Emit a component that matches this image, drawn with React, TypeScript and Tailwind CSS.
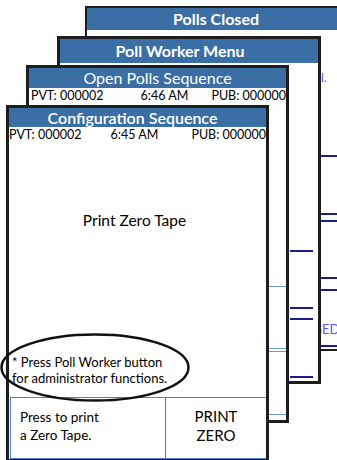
import React from "react";

const font = { fontFamily: "Lato, 'Open Sans', sans-serif" };

function NavyLine({ mt }: { mt: string }) {
  return <div className={`h-[2px] bg-[#1c1c8c] ${mt}`} />;
}

export default function App() {
  return (
    <div
      className="relative w-[337px] h-[460px] overflow-hidden bg-white text-black"
      style={font}
    >
      {/* Polls Closed */}
      <div className="absolute left-[85px] top-[6px] w-[262px] h-[345px] border-2 border-[#1e1e1e] bg-white flex flex-col">
        <div className="h-[22px] bg-[#3c6ea6] flex items-center justify-center text-white font-bold text-[16px] leading-none">
          Polls Closed
        </div>
        <div className="flex-1 flex flex-col pl-[234px]">
          <div className="mt-[41px] h-[14px] text-[12px] leading-[14px] text-[#4b4be6]">l.</div>
          <NavyLine mt="mt-[70px]" />
          <NavyLine mt="mt-[56px]" />
          <NavyLine mt="mt-[5px]" />
          <NavyLine mt="mt-[55px]" />
          <NavyLine mt="mt-[10px]" />
          <div className="mt-[31px] h-[14px] text-[13px] leading-[14px] text-[#5a5af0] -ml-[6px] whitespace-nowrap">SED</div>
          <NavyLine mt="mt-[9px]" />
        </div>
      </div>

      {/* Poll Worker Menu */}
      <div className="absolute left-[57px] top-[36px] w-[264px] h-[348px] border-[3px] border-[#1e1e1e] bg-white flex flex-col">
        <div className="h-[24px] bg-[#3c6ea6] flex items-center justify-center text-white font-bold text-[16px] leading-none pr-[18px]">
          Poll Worker Menu
        </div>
        <div className="flex-1 flex flex-col pl-[230px] pr-[5px]">
          <NavyLine mt="mt-[187px]" />
          <NavyLine mt="mt-[55px]" />
          <NavyLine mt="mt-[9px]" />
          <NavyLine mt="mt-[56px]" />
        </div>
      </div>

      {/* Open Polls Sequence */}
      <div className="absolute left-[26px] top-[65px] w-[263px] h-[358px] border-[3px] border-[#1e1e1e] bg-white flex flex-col">
        <div className="h-[20px] bg-[#3c6ea6] flex items-center justify-center text-white text-[16px] leading-none">
          Open Polls Sequence
        </div>
        <div className="flex items-center justify-between h-[17px] text-[12.5px] pl-[2px] pr-0">
          <span>PVT: 000002</span>
          <span className="pl-[14px]">6:46 AM</span>
          <span>PUB: 000000</span>
        </div>
        <div className="flex-1 flex flex-col">
          <div className="mt-[181px] h-px bg-[#6d95d8]" />
          <div className="mt-[61px] h-px bg-[#6d95d8]" />
          <div className="mt-[2px] h-px bg-[#6d95d8]" />
          <div className="mt-[62px] h-px bg-[#6d95d8]" />
        </div>
      </div>

      {/* Configuration Sequence */}
      <div className="absolute left-[6px] top-[105px] w-[263px] h-[357px] border-[3px] border-[#1e1e1e] bg-white flex flex-col">
        <div className="h-[19px] bg-[#3c6ea6] flex items-center justify-center text-white text-[16px] font-semibold leading-none pr-[10px]">
          Configuration Sequence
        </div>
        <div className="flex items-center justify-between h-[17px] text-[12.5px] pr-0">
          <span>PVT: 000002</span>
          <span className="pr-[4px]">6:45 AM</span>
          <span>PUB: 000000</span>
        </div>
        <div className="mt-[67px] text-center text-[15.5px] leading-[18px] pr-[6px]">
          Print Zero Tape
        </div>
        <div className="flex-1" />
        <div className="pl-[3px] text-[13px] leading-[16px]">
          <div>* Press Poll Worker button</div>
          <div>for administrator functions.</div>
        </div>
        <div className="mt-[11px] ml-[1px] h-[62px] border-l-[1.5px] border-t-[1.5px] border-b-[1.5px] border-[#4f7fd0] flex">
          <div className="w-[155px] border-r border-[#4f7fd0] pl-[9px] pt-[10px] text-[13.5px] leading-[18px]">
            <div>Press to print</div>
            <div>a Zero Tape.</div>
          </div>
          <div className="flex-1 flex flex-col items-center pt-[9px] text-[15px] leading-[19px]">
            <div>PRINT</div>
            <div>ZERO</div>
          </div>
        </div>
      </div>

      {/* Annotation ellipse */}
      <svg
        className="absolute left-0 top-[332px]"
        width="192"
        height="72"
        viewBox="0 0 192 72"
      >
        <ellipse cx="95" cy="35.5" rx="93.5" ry="33" fill="none" stroke="#111" strokeWidth="2.5" />
      </svg>
    </div>
  );
}
